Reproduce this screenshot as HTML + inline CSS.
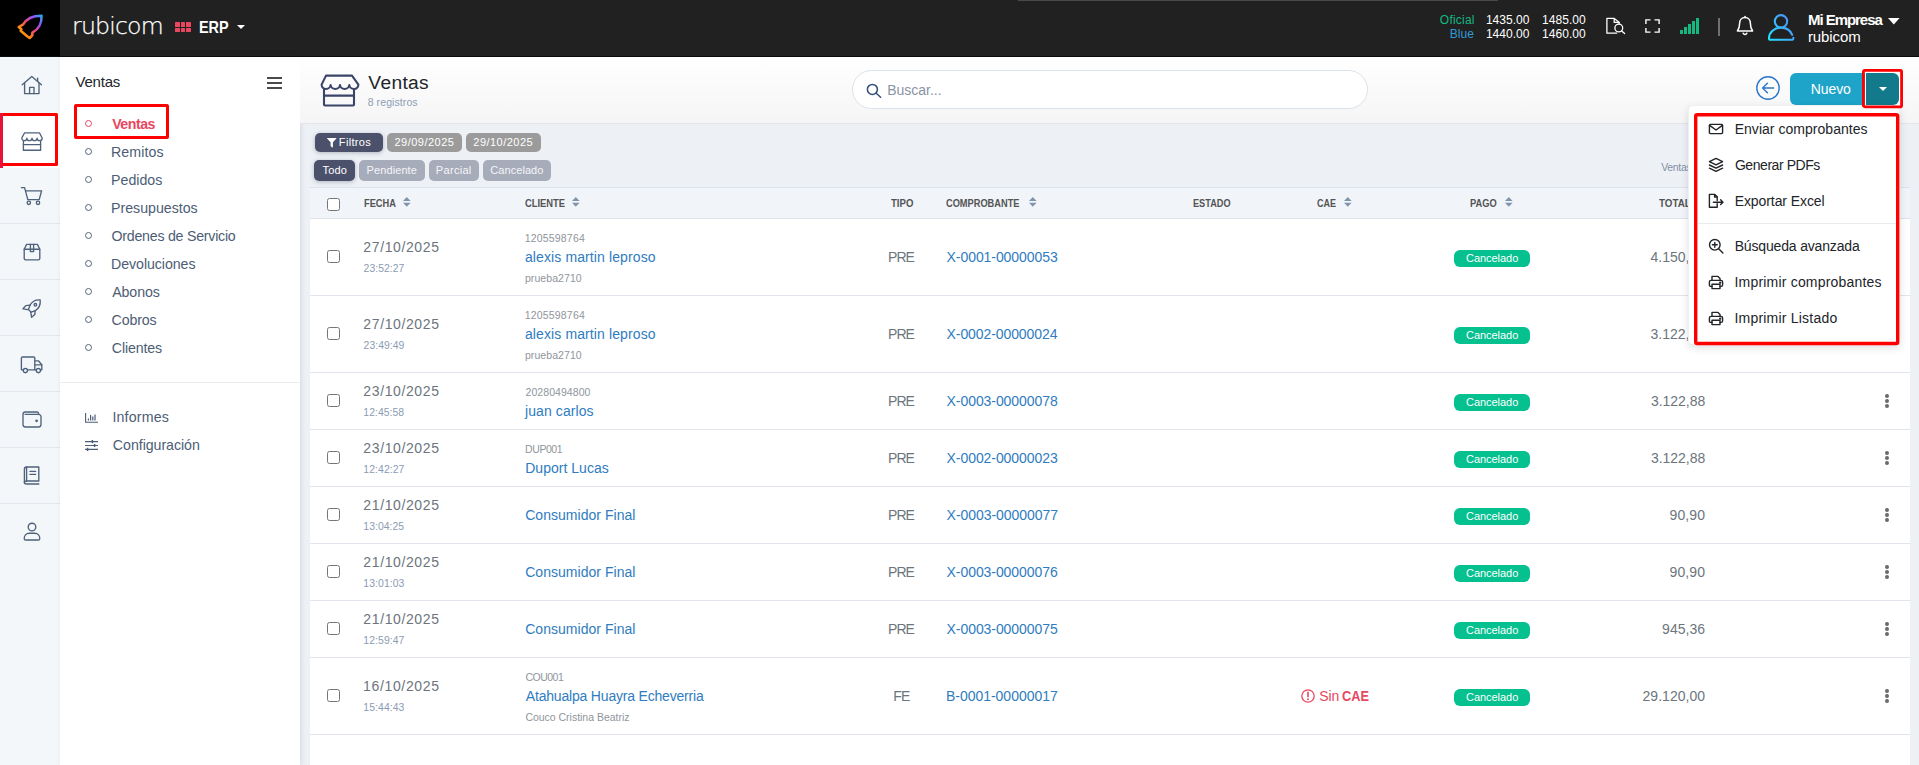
<!DOCTYPE html>
<html lang="es"><head><meta charset="utf-8"><title>Ventas - rubicom ERP</title>
<style>
*{box-sizing:border-box;margin:0;padding:0}
html,body{width:1919px;height:765px;overflow:hidden}
body{position:relative;font-family:"Liberation Sans",sans-serif;background:#edf0f5;color:#212529}
.abs{position:absolute}
svg{position:absolute;overflow:visible}
#topbar{position:absolute;left:0;top:0;width:1919px;height:56px;background:#212121}
#logobox{position:absolute;left:0;top:0;width:60px;height:56px;background:#000}
#rail{position:absolute;left:0;top:56px;width:60px;height:709px;background:#f4f7fa}
#side{position:absolute;left:60px;top:56px;width:240px;height:709px;background:#fff;box-shadow:1px 0 5px rgba(60,70,90,.13)}
#phead{position:absolute;left:300px;top:56px;width:1619px;height:68px;background:linear-gradient(#ffffff,#f5f5f5);border-bottom:1px solid #e2e6eb}
#table{position:absolute;left:310px;top:187px;width:1600px;height:578px;background:#fff}
#thead{position:absolute;left:0;top:0;width:1600px;height:32px;background:#f1f5f9;border-top:1px solid #dde3ea;border-bottom:1px solid #dde2e9}
.row{position:absolute;left:0;width:1600px;border-bottom:1px solid #e1e5eb}
.cb{position:absolute;width:13px;height:13px;border:1px solid #767676;border-radius:2.5px;background:#fff}
.chip{position:absolute;border-radius:5px;color:#fff;font-size:11px;text-align:center;white-space:nowrap}
.badge{position:absolute;width:76px;height:17px;border-radius:6px;background:#05c08f}
.sep{position:absolute;left:0;width:60px;height:1px;background:#e3e8ee}
.redbox{position:absolute;border:3px solid #ff0000;border-radius:2px}
.dot{position:absolute;width:7px;height:7px;border-radius:50%;border:1px solid #55647a}
</style></head><body>

<div id="topbar">
<div class="abs" style="left:1018px;top:0;width:480px;height:1px;background:#4a4a4a"></div>
<div id="logobox">
<svg width="60" height="56" viewBox="0 0 60 56"><defs><linearGradient id="rg" gradientUnits="userSpaceOnUse" x1="19" y1="36" x2="42" y2="15"><stop offset="0" stop-color="#ffb000"/><stop offset=".28" stop-color="#ff7a1a"/><stop offset=".5" stop-color="#f0468a"/><stop offset=".75" stop-color="#8d55ff"/><stop offset="1" stop-color="#1fb0e8"/></linearGradient></defs>
<path d="M41.500 15.700 C33.500 15.600 26.500 18.800 23.200 24.400 L18.800 27 L21.400 29.300 L20.700 30.800 L27.200 36.200 L29.700 38 L32.300 35.300 L32.400 32.700 C38.800 29.300 42 22.500 41.500 15.700 Z" fill="none" stroke="url(#rg)" stroke-width="2.600" stroke-linejoin="round" stroke-linecap="round"/></svg>
</div>
<div id="f1" class="t-logo" style="position:absolute;top:11.22px;line-height:31px;font-size:23.6px;color:#fff;white-space:nowrap;font-weight:200;letter-spacing:-0.833px;left:72.10px;font-family:'DejaVu Sans','Liberation Sans',sans-serif;-webkit-text-stroke:.25px #fff;">rubicom</div>
<div class="abs" style="left:175.4px;top:22.4px;width:4.2px;height:4.2px;background:#e8475f;border-radius:.5px"></div>
<div class="abs" style="left:180.9px;top:22.4px;width:4.2px;height:4.2px;background:#e8475f;border-radius:.5px"></div>
<div class="abs" style="left:186.4px;top:22.4px;width:4.2px;height:4.2px;background:#e8475f;border-radius:.5px"></div>
<div class="abs" style="left:175.4px;top:28.2px;width:4.2px;height:4.2px;background:#e8475f;border-radius:.5px"></div>
<div class="abs" style="left:180.9px;top:28.2px;width:4.2px;height:4.2px;background:#e8475f;border-radius:.5px"></div>
<div class="abs" style="left:186.4px;top:28.2px;width:4.2px;height:4.2px;background:#e8475f;border-radius:.5px"></div>
<div id="f2" class="t-erp" style="position:absolute;top:17.08px;line-height:21px;font-size:16.5px;color:#fff;white-space:nowrap;font-weight:700;left:198.69px;transform:scaleX(0.8741);transform-origin:left center;">ERP</div>
<svg style="left:236.5px;top:25px" width="8" height="4" viewBox="0 0 8 4"><path d="M0 0h8L4 4z" fill="#fff"/></svg>
<div id="f3" style="position:absolute;top:12.04px;line-height:16px;font-size:12px;color:#12b981;white-space:nowrap;letter-spacing:0.225px;right:444.26px;">Oficial</div>
<div id="f4" style="position:absolute;top:25.64px;line-height:16px;font-size:12px;color:#2e9bd8;white-space:nowrap;letter-spacing:0.033px;right:445.03px;">Blue</div>
<div id="f5" style="position:absolute;top:12.04px;line-height:16px;font-size:12px;color:#fff;white-space:nowrap;letter-spacing:0.017px;left:1485.91px;">1435.00</div>
<div id="f6" style="position:absolute;top:25.64px;line-height:16px;font-size:12px;color:#fff;white-space:nowrap;letter-spacing:0.017px;left:1485.91px;">1440.00</div>
<div id="f7" style="position:absolute;top:12.04px;line-height:16px;font-size:12px;color:#fff;white-space:nowrap;letter-spacing:0.050px;left:1542.01px;">1485.00</div>
<div id="f8" style="position:absolute;top:25.64px;line-height:16px;font-size:12px;color:#fff;white-space:nowrap;letter-spacing:0.050px;left:1542.01px;">1460.00</div>
<svg style="left:1604px;top:16px" width="24" height="20" viewBox="0 0 24 20" fill="none" stroke="#fff" stroke-width="1.300" stroke-linejoin="round" stroke-linecap="round"><path d="M12.600 17.200H2.900V2.400h7.300l4.900 3.800v1.500"/><path d="M10.200 2.600v3.800h4.700"/><circle cx="14.800" cy="12" r="3.900"/><path d="M17.700 14.900l2.900 2.700"/></svg>
<svg style="left:1645px;top:19px" width="15" height="14" viewBox="0 0 15 14" fill="none" stroke="#fff" stroke-width="1.400"><path d="M.9 5V.9H5.500M9.500.9h4.600V5M14.100 9v4.100H9.500M5.500 13.100H.9V9"/></svg>
<div class="abs" style="left:1679.8px;top:29.9px;width:3px;height:4.10px;background:#12b981"></div>
<div class="abs" style="left:1683.8px;top:26.75px;width:3px;height:7.25px;background:#12b981"></div>
<div class="abs" style="left:1687.8px;top:24px;width:3px;height:10.00px;background:#12b981"></div>
<div class="abs" style="left:1691.9px;top:20.8px;width:3px;height:13.20px;background:#12b981"></div>
<div class="abs" style="left:1695.9px;top:17.9px;width:3px;height:16.10px;background:#12b981"></div>
<div class="abs" style="left:1718.200px;top:18.200px;width:1.600px;height:17.800px;background:#707070"></div>
<svg style="left:1735px;top:15px" width="20" height="22" viewBox="0 0 20 22" fill="none" stroke="#fff" stroke-width="1.5" stroke-linejoin="round" stroke-linecap="round"><path d="M10 2.4c-3.4 0-5.4 2.6-5.4 6 0 3.600-.9 5.800-2.200 7.600h15.200c-1.300-1.800-2.200-4-2.200-7.600 0-3.400-2-6-5.400-6z"/><path d="M8.200 18.300a1.900 1.900 0 0 0 3.600 0"/><path d="M10 1.400v1"/></svg>
<svg style="left:1766px;top:13px" width="30" height="30" viewBox="0 0 30 30" fill="none" stroke="url(#ug)" stroke-width="2.1" stroke-linecap="round"><defs><linearGradient id="ug" gradientUnits="userSpaceOnUse" x1="2" y1="26" x2="28" y2="10"><stop offset="0" stop-color="#1fe6ff"/><stop offset="1" stop-color="#4d8cf7"/></linearGradient></defs><circle cx="15" cy="8.300" r="6.200"/><path d="M26.200 21.800c-1.700-4.300-6-7.200-11.200-7.200C8.400 14.600 3 19.400 3 25.200c0 .9.700 1.600 1.600 1.600h20.800c1.200 0 2-.7 2-1.900"/></svg>
<div id="f9" class="t-emp" style="position:absolute;top:10.00px;line-height:20px;font-size:15px;color:#fff;white-space:nowrap;font-weight:700;letter-spacing:-1.039px;left:1807.97px;">Mi Empresa</div>
<div id="f10" class="t-rub" style="position:absolute;top:26.90px;line-height:20px;font-size:15px;color:#fff;white-space:nowrap;letter-spacing:-0.092px;left:1807.97px;">rubicom</div>
<svg style="left:1888.4px;top:17.7px" width="11.600" height="6.500" viewBox="0 0 12 6.500"><path d="M0 0h12L6 6.500z" fill="#fff"/></svg>
</div>
<div class="abs" style="left:0;top:56px;width:1919px;height:1px;background:#0b0b0b;z-index:5"></div>
<div id="rail">
<div class="sep" style="top:111.4px"></div>
<div class="sep" style="top:167.3px"></div>
<div class="sep" style="top:223.2px"></div>
<div class="sep" style="top:279.1px"></div>
<div class="sep" style="top:335.0px"></div>
<div class="sep" style="top:390.9px"></div>
<div class="sep" style="top:446.8px"></div>
<div class="abs" style="left:0;top:57px;width:60px;height:55px;background:#fff"></div>
<svg style="left:20px;top:18px" width="24" height="22" viewBox="0 0 24 22" fill="none" stroke="#4f627b" stroke-width="1.350" stroke-linejoin="round" stroke-linecap="round"><path d="M2.200 10.800L11.800 2.400l9.600 8.400"/><path d="M4.600 9v10.600h14.400V9"/><path d="M9.600 19.600v-6.200h4.400v6.200"/><path d="M17.600 7.400V4.200"/></svg>
<svg style="left:20px;top:74.500px" width="24" height="22" viewBox="0 0 24 22" fill="none" stroke="#4f627b" stroke-width="1.350" stroke-linejoin="round" stroke-linecap="round"><path d="M4.600 1.800h14.800l2.800 5.200c0 1.500-1.100 2.600-2.500 2.600s-2.600-1.100-2.600-2.400c0 1.300-1.100 2.400-2.500 2.400S12 8.500 12 7.200c0 1.300-1.100 2.400-2.600 2.400S6.900 8.500 6.900 7.200c0 1.300-1.200 2.400-2.600 2.400S1.800 8.500 1.800 7z"/><path d="M3.400 9.600v9.600h17.200V9.600"/><path d="M3.400 13.600h17.200"/></svg>
<svg style="left:20px;top:130px" width="24" height="20" viewBox="0 0 24 20" fill="none" stroke="#4f627b" stroke-width="1.350" stroke-linejoin="round" stroke-linecap="round"><path d="M1.400 1.600h3.200l3.200 12h11.400l2.400-8.800H6"/><circle cx="8.800" cy="16.800" r="1.700"/><circle cx="18" cy="16.800" r="1.700"/></svg>
<svg style="left:23px;top:187px" width="18" height="18" viewBox="0 0 18 18" fill="none" stroke="#4f627b" stroke-width="1.350" stroke-linejoin="round" stroke-linecap="round"><path d="M1.200 6.200L3.600 1.400h10.800l2.400 4.800v9.200c0 .8-.6 1.400-1.400 1.400H2.600c-.8 0-1.400-.6-1.400-1.400z"/><path d="M1.200 6.200h15.600"/><path d="M7.400 1.400v7.200h3.200V1.400"/></svg>
<svg style="left:22px;top:242.500px" width="20" height="19" viewBox="0 0 20 19" fill="none" stroke="#4f627b" stroke-width="1.350" stroke-linejoin="round" stroke-linecap="round"><path d="M18.200 1c-4.200-.4-8 1.400-10.200 5.200L6.400 10.400l2.800 2.800 4.200-1.600C17 9.400 18.600 5.400 18.200 1z"/><path d="M8 6.200L3.800 6.600 1 9.800l4.600.8"/><path d="M13.200 11.600l-.4 4-3.200 2.600-.8-4.600"/><circle cx="13.400" cy="5.800" r="1.300"/></svg>
<svg style="left:19.500px;top:299.500px" width="24" height="18" viewBox="0 0 24 18" fill="none" stroke="#4f627b" stroke-width="1.350" stroke-linejoin="round" stroke-linecap="round"><path d="M3.200 13.800H1.400V2c0-.6.500-1 1-1h11.400c.6 0 1 .4 1 1v11.800H7.600"/><path d="M14.800 4.800h3.600l3.400 4v5h-1.400M14.800 13.800h1.600"/><path d="M15 8.800h6.600"/><circle cx="5.400" cy="14.600" r="2.100"/><circle cx="18.400" cy="14.600" r="2.100"/></svg>
<svg style="left:21.500px;top:354.500px" width="20" height="17" viewBox="0 0 20 17" fill="none" stroke="#4f627b" stroke-width="1.350" stroke-linejoin="round" stroke-linecap="round"><path d="M16.600 3.400V2.600c0-.9-.7-1.600-1.600-1.600H3.400C2 1 1 2 1 3.400v10.200C1 15 2 16 3.400 16h13.200c1.300 0 2.400-1 2.400-2.400V5.800c0-1.300-1-2.400-2.400-2.400H3.200"/><circle cx="14.600" cy="9.800" r=".7" fill="#4b5f78"/></svg>
<svg style="left:23px;top:409.500px" width="18" height="19" viewBox="0 0 18 19" fill="none" stroke="#4f627b" stroke-width="1.350" stroke-linejoin="round" stroke-linecap="round"><path d="M3.600 1h12.200v14H3.800c-1.400 0-2.400 .6-2.400 1.500S2.400 18 3.800 18h12"/><path d="M1.400 16.500V3.200C1.400 2 2.400 1 3.600 1v14"/><path d="M7 5.400h5.600M7 8.400h5.600"/></svg>
<svg style="left:23px;top:465.500px" width="18" height="19" viewBox="0 0 18 19" fill="none" stroke="#4f627b" stroke-width="1.350" stroke-linejoin="round" stroke-linecap="round"><circle cx="9" cy="5" r="3.800"/><path d="M1.200 16.400c0-3 2.200-5.200 5-5.200h5.600c2.800 0 5 2.200 5 5.200 0 .9-.7 1.600-1.600 1.600H2.800c-.9 0-1.600-.7-1.600-1.600z"/></svg>
</div>
<div class="redbox" style="left:0;top:113.400px;width:58px;height:53px;border-left-color:#f0142f"></div>
<div class="abs" style="left:0;top:113.400px;width:2.600px;height:54.500px;background:#e8123a"></div>
<div id="side"></div>
<div id="f11" class="t-sv" style="position:absolute;top:71.80px;line-height:20px;font-size:15px;color:#212529;white-space:nowrap;letter-spacing:-0.220px;left:75.52px;">Ventas</div>
<div class="abs" style="left:266.700px;top:77.1px;width:15px;height:1.800px;background:#4a4a4a"></div>
<div class="abs" style="left:266.700px;top:82.3px;width:15px;height:1.800px;background:#4a4a4a"></div>
<div class="abs" style="left:266.700px;top:87.4px;width:15px;height:1.800px;background:#4a4a4a"></div>
<div class="dot" style="left:85px;top:119.8px;border-color:#e8475f"></div>
<div id="f12" class="m0" style="position:absolute;top:114.88px;line-height:18px;font-size:14.2px;color:#e8475f;white-space:nowrap;font-weight:700;letter-spacing:-0.490px;left:112.18px;">Ventas</div>
<div class="dot" style="left:85px;top:147.8px;border-color:#55647a"></div>
<div id="f13" class="m1" style="position:absolute;top:142.91px;line-height:18px;font-size:14.2px;color:#4d5d75;white-space:nowrap;letter-spacing:0.075px;left:111.06px;">Remitos</div>
<div class="dot" style="left:85px;top:175.9px;border-color:#55647a"></div>
<div id="f14" class="m2" style="position:absolute;top:170.94px;line-height:18px;font-size:14.2px;color:#4d5d75;white-space:nowrap;letter-spacing:0.008px;left:111.06px;">Pedidos</div>
<div class="dot" style="left:85px;top:203.9px;border-color:#55647a"></div>
<div id="f15" class="m3" style="position:absolute;top:198.97px;line-height:18px;font-size:14.2px;color:#4d5d75;white-space:nowrap;letter-spacing:-0.008px;left:111.06px;">Presupuestos</div>
<div class="dot" style="left:85px;top:231.9px;border-color:#55647a"></div>
<div id="f16" class="m4" style="position:absolute;top:227.00px;line-height:18px;font-size:14.2px;color:#4d5d75;white-space:nowrap;letter-spacing:-0.238px;left:111.50px;">Ordenes de Servicio</div>
<div class="dot" style="left:85px;top:260.0px;border-color:#55647a"></div>
<div id="f17" class="m5" style="position:absolute;top:255.03px;line-height:18px;font-size:14.2px;color:#4d5d75;white-space:nowrap;letter-spacing:-0.064px;left:111.06px;">Devoluciones</div>
<div class="dot" style="left:85px;top:288.0px;border-color:#55647a"></div>
<div id="f18" class="m6" style="position:absolute;top:283.06px;line-height:18px;font-size:14.2px;color:#4d5d75;white-space:nowrap;letter-spacing:-0.080px;left:112.18px;">Abonos</div>
<div class="dot" style="left:85px;top:316.0px;border-color:#55647a"></div>
<div id="f19" class="m7" style="position:absolute;top:311.09px;line-height:18px;font-size:14.2px;color:#4d5d75;white-space:nowrap;letter-spacing:-0.120px;left:111.50px;">Cobros</div>
<div class="dot" style="left:85px;top:344.0px;border-color:#55647a"></div>
<div id="f20" class="m8" style="position:absolute;top:339.12px;line-height:18px;font-size:14.2px;color:#4d5d75;white-space:nowrap;letter-spacing:-0.129px;left:111.78px;">Clientes</div>
<div class="redbox" style="left:73.500px;top:103.700px;width:95.600px;height:35.500px"></div>
<div class="abs" style="left:60px;top:382px;width:240px;height:1px;background:#e9ecef"></div>
<svg style="left:84.500px;top:413px" width="13" height="10" viewBox="0 0 13 10" fill="none" stroke="#4d5d75" stroke-width="1.100"><path d="M.6 0v9.200H13"/><path d="M3.400 7.400V5.600M5.600 7.400V2M7.800 7.400V3.600M10 7.400V1.600" stroke-width="1.200"/></svg>
<div id="f21" style="position:absolute;top:407.58px;line-height:18px;font-size:14.2px;color:#4d5d75;white-space:nowrap;letter-spacing:0.185px;left:112.40px;">Informes</div>
<svg style="left:84.500px;top:440px" width="13" height="11" viewBox="0 0 13 11" fill="none" stroke="#4d5d75" stroke-width="1.200"><path d="M0 1.600h13M0 5.500h13M0 9.400h13"/><path d="M7.400 0v3.200M9.600 3.900v3.200M2.600 7.800V11" stroke-width="1.500"/></svg>
<div id="f22" style="position:absolute;top:435.98px;line-height:18px;font-size:14.2px;color:#4d5d75;white-space:nowrap;letter-spacing:-0.046px;left:112.85px;">Configuración</div>
<div id="phead"></div>
<svg style="left:317.800px;top:73.400px" width="42" height="35" viewBox="0 0 42 35" fill="none" stroke="#3a4468" stroke-width="2.100" stroke-linejoin="round" stroke-linecap="round"><path d="M8 2.600h26l6.400 9c0 2.600-2 4.400-4.400 4.400-2.500 0-4.500-1.800-4.700-4 -.2 2.200-2.200 4-4.700 4s-4.400-1.800-4.600-4c-.2 2.200-2.200 4-4.700 4s-4.500-1.800-4.700-4c-.2 2.200-2.200 4-4.600 4-2.500 0-4.400-1.800-4.400-4.400z"/><path d="M6 16v15.500c0 .6.500 1 1 1h28c.6 0 1-.4 1-1V16"/><path d="M6 22.600h30"/></svg>
<div id="f23" class="t-title" style="position:absolute;top:70.35px;line-height:25px;font-size:19.2px;color:#212529;white-space:nowrap;letter-spacing:0.340px;left:368.32px;">Ventas</div>
<div id="f24" class="t-reg" style="position:absolute;top:94.96px;line-height:14px;font-size:10.5px;color:#8d9db6;white-space:nowrap;letter-spacing:0.090px;left:367.69px;">8 registros</div>
<div class="abs" style="left:852px;top:70px;width:515.500px;height:38.500px;border:1px solid #dce2e9;border-radius:20px;background:#fff"></div>
<svg style="left:865.500px;top:83px" width="16" height="15" viewBox="0 0 16 15" fill="none" stroke="#33507c" stroke-width="1.550" stroke-linecap="round"><circle cx="6.400" cy="6.400" r="5"/><path d="M10.200 10.200l4.400 4"/></svg>
<div id="f25" class="t-search" style="position:absolute;top:81.05px;line-height:18px;font-size:14px;color:#8b93a4;white-space:nowrap;letter-spacing:-0.006px;left:887.19px;">Buscar...</div>
<svg style="left:1756px;top:76px" width="24" height="24" viewBox="0 0 24 24" fill="none" stroke="#2b77c8" stroke-width="1.400" stroke-linecap="round" stroke-linejoin="round"><circle cx="12" cy="12" r="11.200"/><path d="M17.600 12H6.800M11.400 7.200L6.600 12l4.800 4.800"/></svg>
<div class="abs" style="left:1789.800px;top:72.900px;width:76px;height:32.200px;border-radius:6px 0 0 6px;background:#1ea3c9"></div>
<div class="abs" style="left:1864.500px;top:72px;width:35.700px;height:33.600px;background:#fff"></div>
<div class="abs" style="left:1866.100px;top:72.800px;width:33.400px;height:32.300px;border-radius:0 6px 6px 0;background:#127a8b"></div>
<div id="f26" class="t-nuevo" style="position:absolute;top:79.95px;line-height:18px;font-size:14px;color:#fff;white-space:nowrap;letter-spacing:-0.062px;left:1810.68px;">Nuevo</div>
<svg style="left:1878.500px;top:87px" width="8" height="4" viewBox="0 0 8 4"><path d="M0 0h8L4 4z" fill="#fff"/></svg>
<div class="chip" style="left:315px;top:133px;width:68.0px;height:19.0px;background:#4c516b;box-shadow:0 1px 4px rgba(50,55,80,.32);"></div>
<svg style="left:327px;top:137.600px" width="9.500" height="9.500" viewBox="0 0 10 10"><path d="M.3 0h9.400c.3 0 .4.300.2.500L6.200 4.600V9.700c0 .2-.3.400-.5.200L3.900 8.600c-.1-.1-.1-.2-.1-.3V4.600L.1.500C-.1.300 0 0 .3 0z" fill="#fff"/></svg>
<div id="f27" class="t-filtros" style="position:absolute;top:135.29px;line-height:14px;font-size:11px;color:#fff;white-space:nowrap;letter-spacing:0.333px;left:338.85px;">Filtros</div>
<div class="chip" style="left:387px;top:133px;width:75.0px;height:19.0px;background:#9b9b9b;"></div>
<div id="f28" class="t-d1" style="position:absolute;top:135.29px;line-height:14px;font-size:11px;color:#fff;white-space:nowrap;letter-spacing:0.483px;left:394.47px;">29/09/2025</div>
<div class="chip" style="left:466px;top:133px;width:75.0px;height:19.0px;background:#9b9b9b;"></div>
<div id="f29" class="t-d2" style="position:absolute;top:135.29px;line-height:14px;font-size:11px;color:#fff;white-space:nowrap;letter-spacing:0.483px;left:473.29px;">29/10/2025</div>
<div class="chip" style="left:314px;top:160.2px;width:41.0px;height:20.8px;background:#4c516b;box-shadow:0 1px 4px rgba(50,55,80,.32);"></div>
<div id="f30" class="t-todo" style="position:absolute;top:163.19px;line-height:14px;font-size:11px;color:#fff;white-space:nowrap;letter-spacing:0.150px;left:322.58px;">Todo</div>
<div class="chip" style="left:359px;top:160.2px;width:66.0px;height:20.8px;background:#a7acba;"></div>
<div id="f31" class="t-pend" style="position:absolute;top:163.19px;line-height:14px;font-size:11px;color:#f4f5f8;white-space:nowrap;letter-spacing:0.094px;left:366.57px;">Pendiente</div>
<div class="chip" style="left:429px;top:160.2px;width:50.0px;height:20.8px;background:#a7acba;"></div>
<div id="f32" class="t-parc" style="position:absolute;top:163.19px;line-height:14px;font-size:11px;color:#f4f5f8;white-space:nowrap;letter-spacing:0.300px;left:435.86px;">Parcial</div>
<div class="chip" style="left:483px;top:160.2px;width:68.0px;height:20.8px;background:#a7acba;"></div>
<div id="f33" class="t-canc" style="position:absolute;top:163.19px;line-height:14px;font-size:11px;color:#f4f5f8;white-space:nowrap;letter-spacing:0.069px;left:490.29px;">Cancelado</div>
<div class="t-vt" style="position:absolute;top:161.00px;line-height:14px;font-size:10.4px;color:#8391a6;white-space:nowrap;letter-spacing:-0.250px;left:1661.20px;">Ventas:</div>
<div id="table"><div id="thead"></div>
<div class="row" style="top:32px;height:77px"></div>
<div class="row" style="top:109px;height:77px"></div>
<div class="row" style="top:186px;height:57px"></div>
<div class="row" style="top:243px;height:57px"></div>
<div class="row" style="top:300px;height:57px"></div>
<div class="row" style="top:357px;height:57px"></div>
<div class="row" style="top:414px;height:57px"></div>
<div class="row" style="top:471px;height:77px"></div>
</div>
<div class="cb" style="left:327px;top:198px"></div>
<div id="f34" class="th" style="position:absolute;top:196.09px;line-height:14px;font-size:11px;color:#545454;white-space:nowrap;font-weight:700;left:363.55px;transform:scaleX(0.8429);transform-origin:left center;">FECHA</div>
<svg style="left:403.4px;top:197.400px" width="7.600" height="9.800" viewBox="0 0 7.600 9.800"><path d="M0 4.100h7.600L3.800 0z" fill="#7f95ab"/><path d="M0 5.700h7.600L3.800 9.800z" fill="#7f95ab"/></svg>
<div id="f35" class="th" style="position:absolute;top:196.09px;line-height:14px;font-size:11px;color:#545454;white-space:nowrap;font-weight:700;left:525.04px;transform:scaleX(0.8505);transform-origin:left center;">CLIENTE</div>
<svg style="left:572.4px;top:197.400px" width="7.600" height="9.800" viewBox="0 0 7.600 9.800"><path d="M0 4.100h7.600L3.800 0z" fill="#7f95ab"/><path d="M0 5.700h7.600L3.800 9.800z" fill="#7f95ab"/></svg>
<div id="f36" class="th" style="position:absolute;top:196.09px;line-height:14px;font-size:11px;color:#545454;white-space:nowrap;font-weight:700;left:890.58px;transform:scaleX(0.8723);transform-origin:left center;">TIPO</div>
<div id="f37" class="th" style="position:absolute;top:196.09px;line-height:14px;font-size:11px;color:#545454;white-space:nowrap;font-weight:700;left:946.28px;transform:scaleX(0.8408);transform-origin:left center;">COMPROBANTE</div>
<svg style="left:1028.6px;top:197.400px" width="7.600" height="9.800" viewBox="0 0 7.600 9.800"><path d="M0 4.100h7.600L3.800 0z" fill="#7f95ab"/><path d="M0 5.700h7.600L3.800 9.800z" fill="#7f95ab"/></svg>
<div id="f38" class="th" style="position:absolute;top:196.09px;line-height:14px;font-size:11px;color:#545454;white-space:nowrap;font-weight:700;left:1192.99px;transform:scaleX(0.8331);transform-origin:left center;">ESTADO</div>
<div id="f39" class="th" style="position:absolute;top:196.09px;line-height:14px;font-size:11px;color:#545454;white-space:nowrap;font-weight:700;left:1317.34px;transform:scaleX(0.8199);transform-origin:left center;">CAE</div>
<svg style="left:1344.3px;top:197.400px" width="7.600" height="9.800" viewBox="0 0 7.600 9.800"><path d="M0 4.100h7.600L3.800 0z" fill="#7f95ab"/><path d="M0 5.700h7.600L3.800 9.800z" fill="#7f95ab"/></svg>
<div id="f40" class="th" style="position:absolute;top:196.09px;line-height:14px;font-size:11px;color:#545454;white-space:nowrap;font-weight:700;left:1470.06px;transform:scaleX(0.8450);transform-origin:left center;">PAGO</div>
<svg style="left:1505.4px;top:197.400px" width="7.600" height="9.800" viewBox="0 0 7.600 9.800"><path d="M0 4.100h7.600L3.800 0z" fill="#7f95ab"/><path d="M0 5.700h7.600L3.800 9.800z" fill="#7f95ab"/></svg>
<div id="f41" class="th" style="position:absolute;top:196.09px;line-height:14px;font-size:11px;color:#545454;white-space:nowrap;font-weight:700;left:1658.91px;transform:scaleX(0.8916);transform-origin:left center;">TOTAL</div>
<svg style="left:1697px;top:197.400px" width="7.600" height="9.800" viewBox="0 0 7.600 9.800"><path d="M0 4.100h7.600L3.800 0z" fill="#7f95ab"/><path d="M0 5.700h7.600L3.800 9.800z" fill="#7f95ab"/></svg>
<div class="cb" style="left:327px;top:250.4px"></div>
<div id="f42" class="t-date" style="position:absolute;top:238.05px;line-height:18px;font-size:14px;color:#6c757d;white-space:nowrap;letter-spacing:0.617px;left:363.35px;">27/10/2025</div>
<div id="f43" class="t-time" style="position:absolute;top:261.60px;line-height:14px;font-size:10.4px;color:#8b9bb3;white-space:nowrap;letter-spacing:0.043px;left:363.57px;">23:52:27</div>
<div id="f44" class="t-c1" style="position:absolute;top:231.16px;line-height:14px;font-size:10.5px;color:#8f959c;white-space:nowrap;letter-spacing:0.189px;left:524.67px;">1205598764</div>
<div id="f45" class="t-c2" style="position:absolute;top:247.95px;line-height:18px;font-size:14px;color:#2f7cc0;white-space:nowrap;letter-spacing:0.117px;left:524.89px;">alexis martin leproso</div>
<div id="f46" class="t-c3" style="position:absolute;top:270.56px;line-height:14px;font-size:10.5px;color:#8f959c;white-space:nowrap;letter-spacing:0.083px;left:524.89px;">prueba2710</div>
<div id="f47" class="t-tipo" style="position:absolute;top:247.95px;line-height:18px;font-size:14px;color:#6c757d;white-space:nowrap;letter-spacing:-0.950px;left:751.01px;width:300px;text-align:center;">PRE</div>
<div id="f48" class="t-comp" style="position:absolute;top:247.95px;line-height:18px;font-size:14px;color:#2f7cc0;white-space:nowrap;letter-spacing:-0.072px;left:946.60px;">X-0001-00000053</div>
<div class="badge" style="left:1454px;top:250.0px"></div>
<div id="f49" class="t-badge" style="position:absolute;top:250.79px;line-height:14px;font-size:11px;color:#fff;white-space:nowrap;letter-spacing:-0.044px;left:1466.02px;">Cancelado</div>
<div class="t-amt" style="position:absolute;top:247.95px;line-height:18px;font-size:14px;color:#6c757d;white-space:nowrap;letter-spacing:-0.030px;right:214.20px;">4.150,00</div>
<div class="abs" style="left:1884.800px;top:250.1px;width:3.800px;height:3.800px;border-radius:50%;background:#6b6b6b"></div>
<div class="abs" style="left:1884.800px;top:255.1px;width:3.800px;height:3.800px;border-radius:50%;background:#6b6b6b"></div>
<div class="abs" style="left:1884.800px;top:260.1px;width:3.800px;height:3.800px;border-radius:50%;background:#6b6b6b"></div>
<div class="cb" style="left:327px;top:327.4px"></div>
<div id="f50" class="t-date" style="position:absolute;top:315.05px;line-height:18px;font-size:14px;color:#6c757d;white-space:nowrap;letter-spacing:0.617px;left:363.35px;">27/10/2025</div>
<div id="f51" class="t-time" style="position:absolute;top:338.60px;line-height:14px;font-size:10.4px;color:#8b9bb3;white-space:nowrap;letter-spacing:0.043px;left:363.57px;">23:49:49</div>
<div id="f52" class="t-c1" style="position:absolute;top:308.16px;line-height:14px;font-size:10.5px;color:#8f959c;white-space:nowrap;letter-spacing:0.189px;left:524.67px;">1205598764</div>
<div id="f53" class="t-c2" style="position:absolute;top:324.95px;line-height:18px;font-size:14px;color:#2f7cc0;white-space:nowrap;letter-spacing:0.117px;left:524.89px;">alexis martin leproso</div>
<div id="f54" class="t-c3" style="position:absolute;top:347.56px;line-height:14px;font-size:10.5px;color:#8f959c;white-space:nowrap;letter-spacing:0.083px;left:524.89px;">prueba2710</div>
<div id="f55" class="t-tipo" style="position:absolute;top:324.95px;line-height:18px;font-size:14px;color:#6c757d;white-space:nowrap;letter-spacing:-0.950px;left:751.01px;width:300px;text-align:center;">PRE</div>
<div id="f56" class="t-comp" style="position:absolute;top:324.95px;line-height:18px;font-size:14px;color:#2f7cc0;white-space:nowrap;letter-spacing:-0.090px;left:946.60px;">X-0002-00000024</div>
<div class="badge" style="left:1454px;top:327.0px"></div>
<div id="f57" class="t-badge" style="position:absolute;top:327.79px;line-height:14px;font-size:11px;color:#fff;white-space:nowrap;letter-spacing:-0.044px;left:1466.02px;">Cancelado</div>
<div class="t-amt" style="position:absolute;top:324.95px;line-height:18px;font-size:14px;color:#6c757d;white-space:nowrap;letter-spacing:-0.030px;right:214.20px;">3.122,88</div>
<div class="abs" style="left:1884.800px;top:327.1px;width:3.800px;height:3.800px;border-radius:50%;background:#6b6b6b"></div>
<div class="abs" style="left:1884.800px;top:332.1px;width:3.800px;height:3.800px;border-radius:50%;background:#6b6b6b"></div>
<div class="abs" style="left:1884.800px;top:337.1px;width:3.800px;height:3.800px;border-radius:50%;background:#6b6b6b"></div>
<div class="cb" style="left:327px;top:394.4px"></div>
<div id="f58" class="t-date" style="position:absolute;top:382.05px;line-height:18px;font-size:14px;color:#6c757d;white-space:nowrap;letter-spacing:0.617px;left:363.35px;">23/10/2025</div>
<div id="f59" class="t-time" style="position:absolute;top:405.60px;line-height:14px;font-size:10.4px;color:#8b9bb3;white-space:nowrap;letter-spacing:0.043px;left:363.35px;">12:45:58</div>
<div id="f60" class="t-c1" style="position:absolute;top:385.06px;line-height:14px;font-size:10.5px;color:#8f959c;white-space:nowrap;letter-spacing:0.060px;left:525.57px;">20280494800</div>
<div id="f61" class="t-c2" style="position:absolute;top:401.75px;line-height:18px;font-size:14px;color:#2f7cc0;white-space:nowrap;letter-spacing:0.090px;left:525.03px;">juan carlos</div>
<div id="f62" class="t-tipo" style="position:absolute;top:391.95px;line-height:18px;font-size:14px;color:#6c757d;white-space:nowrap;letter-spacing:-0.950px;left:751.01px;width:300px;text-align:center;">PRE</div>
<div id="f63" class="t-comp" style="position:absolute;top:391.95px;line-height:18px;font-size:14px;color:#2f7cc0;white-space:nowrap;letter-spacing:-0.072px;left:946.60px;">X-0003-00000078</div>
<div class="badge" style="left:1454px;top:394.0px"></div>
<div id="f64" class="t-badge" style="position:absolute;top:394.79px;line-height:14px;font-size:11px;color:#fff;white-space:nowrap;letter-spacing:-0.044px;left:1466.02px;">Cancelado</div>
<div id="f65" class="t-amt" style="position:absolute;top:391.95px;line-height:18px;font-size:14px;color:#6c757d;white-space:nowrap;letter-spacing:-0.029px;right:213.84px;">3.122,88</div>
<div class="abs" style="left:1884.800px;top:394.1px;width:3.800px;height:3.800px;border-radius:50%;background:#6b6b6b"></div>
<div class="abs" style="left:1884.800px;top:399.1px;width:3.800px;height:3.800px;border-radius:50%;background:#6b6b6b"></div>
<div class="abs" style="left:1884.800px;top:404.1px;width:3.800px;height:3.800px;border-radius:50%;background:#6b6b6b"></div>
<div class="cb" style="left:327px;top:451.4px"></div>
<div id="f66" class="t-date" style="position:absolute;top:439.05px;line-height:18px;font-size:14px;color:#6c757d;white-space:nowrap;letter-spacing:0.617px;left:363.35px;">23/10/2025</div>
<div id="f67" class="t-time" style="position:absolute;top:462.60px;line-height:14px;font-size:10.4px;color:#8b9bb3;white-space:nowrap;letter-spacing:0.078px;left:363.35px;">12:42:27</div>
<div id="f68" class="t-c1" style="position:absolute;top:442.06px;line-height:14px;font-size:10.5px;color:#8f959c;white-space:nowrap;letter-spacing:-0.440px;left:525.12px;">DUP001</div>
<div id="f69" class="t-c2" style="position:absolute;top:458.75px;line-height:18px;font-size:14px;color:#2f7cc0;white-space:nowrap;letter-spacing:0.023px;left:525.21px;">Duport Lucas</div>
<div id="f70" class="t-tipo" style="position:absolute;top:448.95px;line-height:18px;font-size:14px;color:#6c757d;white-space:nowrap;letter-spacing:-0.950px;left:751.01px;width:300px;text-align:center;">PRE</div>
<div id="f71" class="t-comp" style="position:absolute;top:448.95px;line-height:18px;font-size:14px;color:#2f7cc0;white-space:nowrap;letter-spacing:-0.072px;left:946.60px;">X-0002-00000023</div>
<div class="badge" style="left:1454px;top:451.0px"></div>
<div id="f72" class="t-badge" style="position:absolute;top:451.79px;line-height:14px;font-size:11px;color:#fff;white-space:nowrap;letter-spacing:-0.044px;left:1466.02px;">Cancelado</div>
<div id="f73" class="t-amt" style="position:absolute;top:448.95px;line-height:18px;font-size:14px;color:#6c757d;white-space:nowrap;letter-spacing:-0.029px;right:213.84px;">3.122,88</div>
<div class="abs" style="left:1884.800px;top:451.1px;width:3.800px;height:3.800px;border-radius:50%;background:#6b6b6b"></div>
<div class="abs" style="left:1884.800px;top:456.1px;width:3.800px;height:3.800px;border-radius:50%;background:#6b6b6b"></div>
<div class="abs" style="left:1884.800px;top:461.1px;width:3.800px;height:3.800px;border-radius:50%;background:#6b6b6b"></div>
<div class="cb" style="left:327px;top:508.4px"></div>
<div id="f74" class="t-date" style="position:absolute;top:496.05px;line-height:18px;font-size:14px;color:#6c757d;white-space:nowrap;letter-spacing:0.617px;left:363.35px;">21/10/2025</div>
<div id="f75" class="t-time" style="position:absolute;top:519.60px;line-height:14px;font-size:10.4px;color:#8b9bb3;white-space:nowrap;letter-spacing:0.043px;left:363.35px;">13:04:25</div>
<div id="f76" class="t-c2" style="position:absolute;top:505.95px;line-height:18px;font-size:14px;color:#2f7cc0;white-space:nowrap;letter-spacing:0.040px;left:525.16px;">Consumidor Final</div>
<div id="f77" class="t-tipo" style="position:absolute;top:505.95px;line-height:18px;font-size:14px;color:#6c757d;white-space:nowrap;letter-spacing:-0.950px;left:751.01px;width:300px;text-align:center;">PRE</div>
<div id="f78" class="t-comp" style="position:absolute;top:505.95px;line-height:18px;font-size:14px;color:#2f7cc0;white-space:nowrap;letter-spacing:-0.054px;left:946.60px;">X-0003-00000077</div>
<div class="badge" style="left:1454px;top:508.0px"></div>
<div id="f79" class="t-badge" style="position:absolute;top:508.79px;line-height:14px;font-size:11px;color:#fff;white-space:nowrap;letter-spacing:-0.044px;left:1466.02px;">Cancelado</div>
<div id="f80" class="t-amt" style="position:absolute;top:505.95px;line-height:18px;font-size:14px;color:#6c757d;white-space:nowrap;letter-spacing:0.113px;right:213.84px;">90,90</div>
<div class="abs" style="left:1884.800px;top:508.1px;width:3.800px;height:3.800px;border-radius:50%;background:#6b6b6b"></div>
<div class="abs" style="left:1884.800px;top:513.1px;width:3.800px;height:3.800px;border-radius:50%;background:#6b6b6b"></div>
<div class="abs" style="left:1884.800px;top:518.1px;width:3.800px;height:3.800px;border-radius:50%;background:#6b6b6b"></div>
<div class="cb" style="left:327px;top:565.4px"></div>
<div id="f81" class="t-date" style="position:absolute;top:553.05px;line-height:18px;font-size:14px;color:#6c757d;white-space:nowrap;letter-spacing:0.617px;left:363.35px;">21/10/2025</div>
<div id="f82" class="t-time" style="position:absolute;top:576.60px;line-height:14px;font-size:10.4px;color:#8b9bb3;white-space:nowrap;letter-spacing:0.078px;left:363.35px;">13:01:03</div>
<div id="f83" class="t-c2" style="position:absolute;top:562.95px;line-height:18px;font-size:14px;color:#2f7cc0;white-space:nowrap;letter-spacing:0.040px;left:525.16px;">Consumidor Final</div>
<div id="f84" class="t-tipo" style="position:absolute;top:562.95px;line-height:18px;font-size:14px;color:#6c757d;white-space:nowrap;letter-spacing:-0.950px;left:751.01px;width:300px;text-align:center;">PRE</div>
<div id="f85" class="t-comp" style="position:absolute;top:562.95px;line-height:18px;font-size:14px;color:#2f7cc0;white-space:nowrap;letter-spacing:-0.072px;left:946.60px;">X-0003-00000076</div>
<div class="badge" style="left:1454px;top:565.0px"></div>
<div id="f86" class="t-badge" style="position:absolute;top:565.79px;line-height:14px;font-size:11px;color:#fff;white-space:nowrap;letter-spacing:-0.044px;left:1466.02px;">Cancelado</div>
<div id="f87" class="t-amt" style="position:absolute;top:562.95px;line-height:18px;font-size:14px;color:#6c757d;white-space:nowrap;letter-spacing:0.113px;right:213.84px;">90,90</div>
<div class="abs" style="left:1884.800px;top:565.1px;width:3.800px;height:3.800px;border-radius:50%;background:#6b6b6b"></div>
<div class="abs" style="left:1884.800px;top:570.1px;width:3.800px;height:3.800px;border-radius:50%;background:#6b6b6b"></div>
<div class="abs" style="left:1884.800px;top:575.1px;width:3.800px;height:3.800px;border-radius:50%;background:#6b6b6b"></div>
<div class="cb" style="left:327px;top:622.4px"></div>
<div id="f88" class="t-date" style="position:absolute;top:610.05px;line-height:18px;font-size:14px;color:#6c757d;white-space:nowrap;letter-spacing:0.617px;left:363.35px;">21/10/2025</div>
<div id="f89" class="t-time" style="position:absolute;top:633.60px;line-height:14px;font-size:10.4px;color:#8b9bb3;white-space:nowrap;letter-spacing:0.078px;left:363.35px;">12:59:47</div>
<div id="f90" class="t-c2" style="position:absolute;top:619.95px;line-height:18px;font-size:14px;color:#2f7cc0;white-space:nowrap;letter-spacing:0.040px;left:525.16px;">Consumidor Final</div>
<div id="f91" class="t-tipo" style="position:absolute;top:619.95px;line-height:18px;font-size:14px;color:#6c757d;white-space:nowrap;letter-spacing:-0.950px;left:751.01px;width:300px;text-align:center;">PRE</div>
<div id="f92" class="t-comp" style="position:absolute;top:619.95px;line-height:18px;font-size:14px;color:#2f7cc0;white-space:nowrap;letter-spacing:-0.072px;left:946.60px;">X-0003-00000075</div>
<div class="badge" style="left:1454px;top:622.0px"></div>
<div id="f93" class="t-badge" style="position:absolute;top:622.79px;line-height:14px;font-size:11px;color:#fff;white-space:nowrap;letter-spacing:-0.044px;left:1466.02px;">Cancelado</div>
<div id="f94" class="t-amt" style="position:absolute;top:619.95px;line-height:18px;font-size:14px;color:#6c757d;white-space:nowrap;letter-spacing:0.050px;right:213.84px;">945,36</div>
<div class="abs" style="left:1884.800px;top:622.1px;width:3.800px;height:3.800px;border-radius:50%;background:#6b6b6b"></div>
<div class="abs" style="left:1884.800px;top:627.1px;width:3.800px;height:3.800px;border-radius:50%;background:#6b6b6b"></div>
<div class="abs" style="left:1884.800px;top:632.1px;width:3.800px;height:3.800px;border-radius:50%;background:#6b6b6b"></div>
<div class="cb" style="left:327px;top:689.4px"></div>
<div id="f95" class="t-date" style="position:absolute;top:677.05px;line-height:18px;font-size:14px;color:#6c757d;white-space:nowrap;letter-spacing:0.645px;left:363.12px;">16/10/2025</div>
<div id="f96" class="t-time" style="position:absolute;top:700.60px;line-height:14px;font-size:10.4px;color:#8b9bb3;white-space:nowrap;letter-spacing:0.078px;left:363.35px;">15:44:43</div>
<div id="f97" class="t-c1" style="position:absolute;top:670.16px;line-height:14px;font-size:10.5px;color:#8f959c;white-space:nowrap;letter-spacing:-0.500px;left:525.39px;">COU001</div>
<div id="f98" class="t-c2" style="position:absolute;top:686.95px;line-height:18px;font-size:14px;color:#2f7cc0;white-space:nowrap;letter-spacing:-0.190px;left:525.84px;">Atahualpa Huayra Echeverria</div>
<div id="f99" class="t-c3" style="position:absolute;top:709.56px;line-height:14px;font-size:10.5px;color:#8f959c;white-space:nowrap;letter-spacing:-0.017px;left:525.39px;">Couco Cristina Beatriz</div>
<div id="f100" class="t-tipo" style="position:absolute;top:686.95px;line-height:18px;font-size:14px;color:#6c757d;white-space:nowrap;letter-spacing:-0.850px;left:751.40px;width:300px;text-align:center;">FE</div>
<div id="f101" class="t-comp" style="position:absolute;top:686.95px;line-height:18px;font-size:14px;color:#2f7cc0;white-space:nowrap;letter-spacing:-0.018px;left:945.93px;">B-0001-00000017</div>
<svg style="left:1300.600px;top:688.8px" width="14" height="14" viewBox="0 0 14 14"><circle cx="7" cy="7" r="6.200" fill="none" stroke="#e8475f" stroke-width="1.300"/><path d="M7 3.400v4.400" stroke="#e8475f" stroke-width="1.600" stroke-linecap="round"/><circle cx="7" cy="10.200" r=".95" fill="#e8475f"/></svg>
<div id="f102" class="t-sin" style="position:absolute;top:686.95px;line-height:18px;font-size:14px;color:#e8475f;white-space:nowrap;letter-spacing:-0.150px;left:1319.30px;">Sin</div>
<div id="f103" class="t-cae" style="position:absolute;top:686.95px;line-height:18px;font-size:14px;color:#e8475f;white-space:nowrap;font-weight:700;left:1341.96px;transform:scaleX(0.9113);transform-origin:left center;">CAE</div>
<div class="badge" style="left:1454px;top:689.0px"></div>
<div id="f104" class="t-badge" style="position:absolute;top:689.79px;line-height:14px;font-size:11px;color:#fff;white-space:nowrap;letter-spacing:-0.044px;left:1466.02px;">Cancelado</div>
<div id="f105" class="t-amt" style="position:absolute;top:686.95px;line-height:18px;font-size:14px;color:#6c757d;white-space:nowrap;letter-spacing:0.037px;right:213.84px;">29.120,00</div>
<div class="abs" style="left:1884.800px;top:689.1px;width:3.800px;height:3.800px;border-radius:50%;background:#6b6b6b"></div>
<div class="abs" style="left:1884.800px;top:694.1px;width:3.800px;height:3.800px;border-radius:50%;background:#6b6b6b"></div>
<div class="abs" style="left:1884.800px;top:699.1px;width:3.800px;height:3.800px;border-radius:50%;background:#6b6b6b"></div>
<div class="abs" style="left:1688px;top:105.300px;width:211.500px;height:239.500px;background:#fff;border-radius:5px;border:1px solid rgba(0,0,0,.06);box-shadow:0 3px 9px rgba(0,0,0,.12)"></div>
<svg style="left:1708px;top:123px" width="16" height="12" viewBox="0 0 16 12" fill="none" stroke="#212529" stroke-width="1.400" stroke-linejoin="round" stroke-linecap="round"><rect x="1.400" y="1.400" width="13.200" height="9.200" rx="1"/><path d="M1.600 2.400L8 7l6.400-4.600"/></svg>
<svg style="left:1708px;top:157px" width="16" height="16" viewBox="0 0 16 16" fill="none" stroke="#212529" stroke-width="1.400" stroke-linejoin="round" stroke-linecap="round"><path d="M8 1.400l6.600 3.200L8 7.800 1.400 4.600z"/><path d="M1.400 8l6.600 3.200L14.600 8"/><path d="M1.400 11.200L8 14.400l6.600-3.200"/></svg>
<svg style="left:1707.500px;top:193px" width="17" height="16" viewBox="0 0 17 16" fill="none" stroke="#212529" stroke-width="1.400" stroke-linejoin="round" stroke-linecap="round"><path d="M9.200 10.600v3.600H1.400V1.400h5.400l2.400 2.400V7.600"/><path d="M6.600 1.600v2.400h2.400"/><path d="M5.400 9.200h9.600M12.600 6.800l2.400 2.400-2.400 2.400"/></svg>
<div class="abs" style="left:1697.500px;top:223px;width:199px;height:1px;background:#e9ecef"></div>
<svg style="left:1708px;top:238px" width="16" height="16" viewBox="0 0 16 16" fill="none" stroke="#212529" stroke-width="1.400" stroke-linejoin="round" stroke-linecap="round"><circle cx="6.800" cy="6.800" r="5.300"/><path d="M10.700 10.700l4.200 4.200M6.800 4.400v4.800M4.400 6.800h4.800"/></svg>
<svg style="left:1708px;top:274.500px" width="16" height="15" viewBox="0 0 16 15" fill="none" stroke="#212529" stroke-width="1.400" stroke-linejoin="round" stroke-linecap="round"><path d="M4 5.400V1.400h6l2 2v2"/><path d="M4 11.400H2.800c-.8 0-1.400-.6-1.400-1.400V7c0-.9.700-1.600 1.600-1.600h10c.9 0 1.600.7 1.600 1.600v3c0 .8-.6 1.400-1.400 1.400H12"/><path d="M4 9.200h8v4.400H4z"/><circle cx="12.200" cy="7.600" r=".5" fill="#212529"/></svg>
<svg style="left:1708px;top:310.500px" width="16" height="15" viewBox="0 0 16 15" fill="none" stroke="#212529" stroke-width="1.400" stroke-linejoin="round" stroke-linecap="round"><path d="M4 5.400V1.400h6l2 2v2"/><path d="M4 11.400H2.800c-.8 0-1.400-.6-1.400-1.400V7c0-.9.700-1.600 1.600-1.600h10c.9 0 1.600.7 1.600 1.600v3c0 .8-.6 1.400-1.400 1.400H12"/><path d="M4 9.200h8v4.400H4z"/><circle cx="12.200" cy="7.600" r=".5" fill="#212529"/></svg>
<div id="f106" class="t-dd" style="position:absolute;top:120.15px;line-height:18px;font-size:14px;color:#212529;white-space:nowrap;letter-spacing:0.030px;left:1734.68px;">Enviar comprobantes</div>
<div id="f107" class="t-dd" style="position:absolute;top:156.15px;line-height:18px;font-size:14px;color:#212529;white-space:nowrap;letter-spacing:-0.441px;left:1734.91px;">Generar PDFs</div>
<div id="f108" class="t-dd" style="position:absolute;top:192.15px;line-height:18px;font-size:14px;color:#212529;white-space:nowrap;letter-spacing:-0.084px;left:1734.68px;">Exportar Excel</div>
<div id="f109" class="t-dd" style="position:absolute;top:237.15px;line-height:18px;font-size:14px;color:#212529;white-space:nowrap;letter-spacing:-0.165px;left:1734.68px;">Búsqueda avanzada</div>
<div id="f110" class="t-dd" style="position:absolute;top:272.95px;line-height:18px;font-size:14px;color:#212529;white-space:nowrap;letter-spacing:0.200px;left:1734.46px;">Imprimir comprobantes</div>
<div id="f111" class="t-dd" style="position:absolute;top:308.95px;line-height:18px;font-size:14px;color:#212529;white-space:nowrap;letter-spacing:0.210px;left:1734.46px;">Imprimir Listado</div>
<svg style="left:1694.10px;top:113.10px" width="205.40" height="232.20" viewBox="0 0 205.40 232.20"><rect x="1.70" y="1.70" width="202.00" height="228.80" rx="1.5" fill="none" stroke="#ff0000" stroke-width="3.4"/></svg>
<svg style="left:1861.80px;top:69.30px" width="41.00" height="39.20" viewBox="0 0 41.00 39.20"><rect x="1.40" y="1.40" width="38.20" height="36.40" rx="1.4" fill="none" stroke="#ff0000" stroke-width="2.8"/></svg>
</body></html>
